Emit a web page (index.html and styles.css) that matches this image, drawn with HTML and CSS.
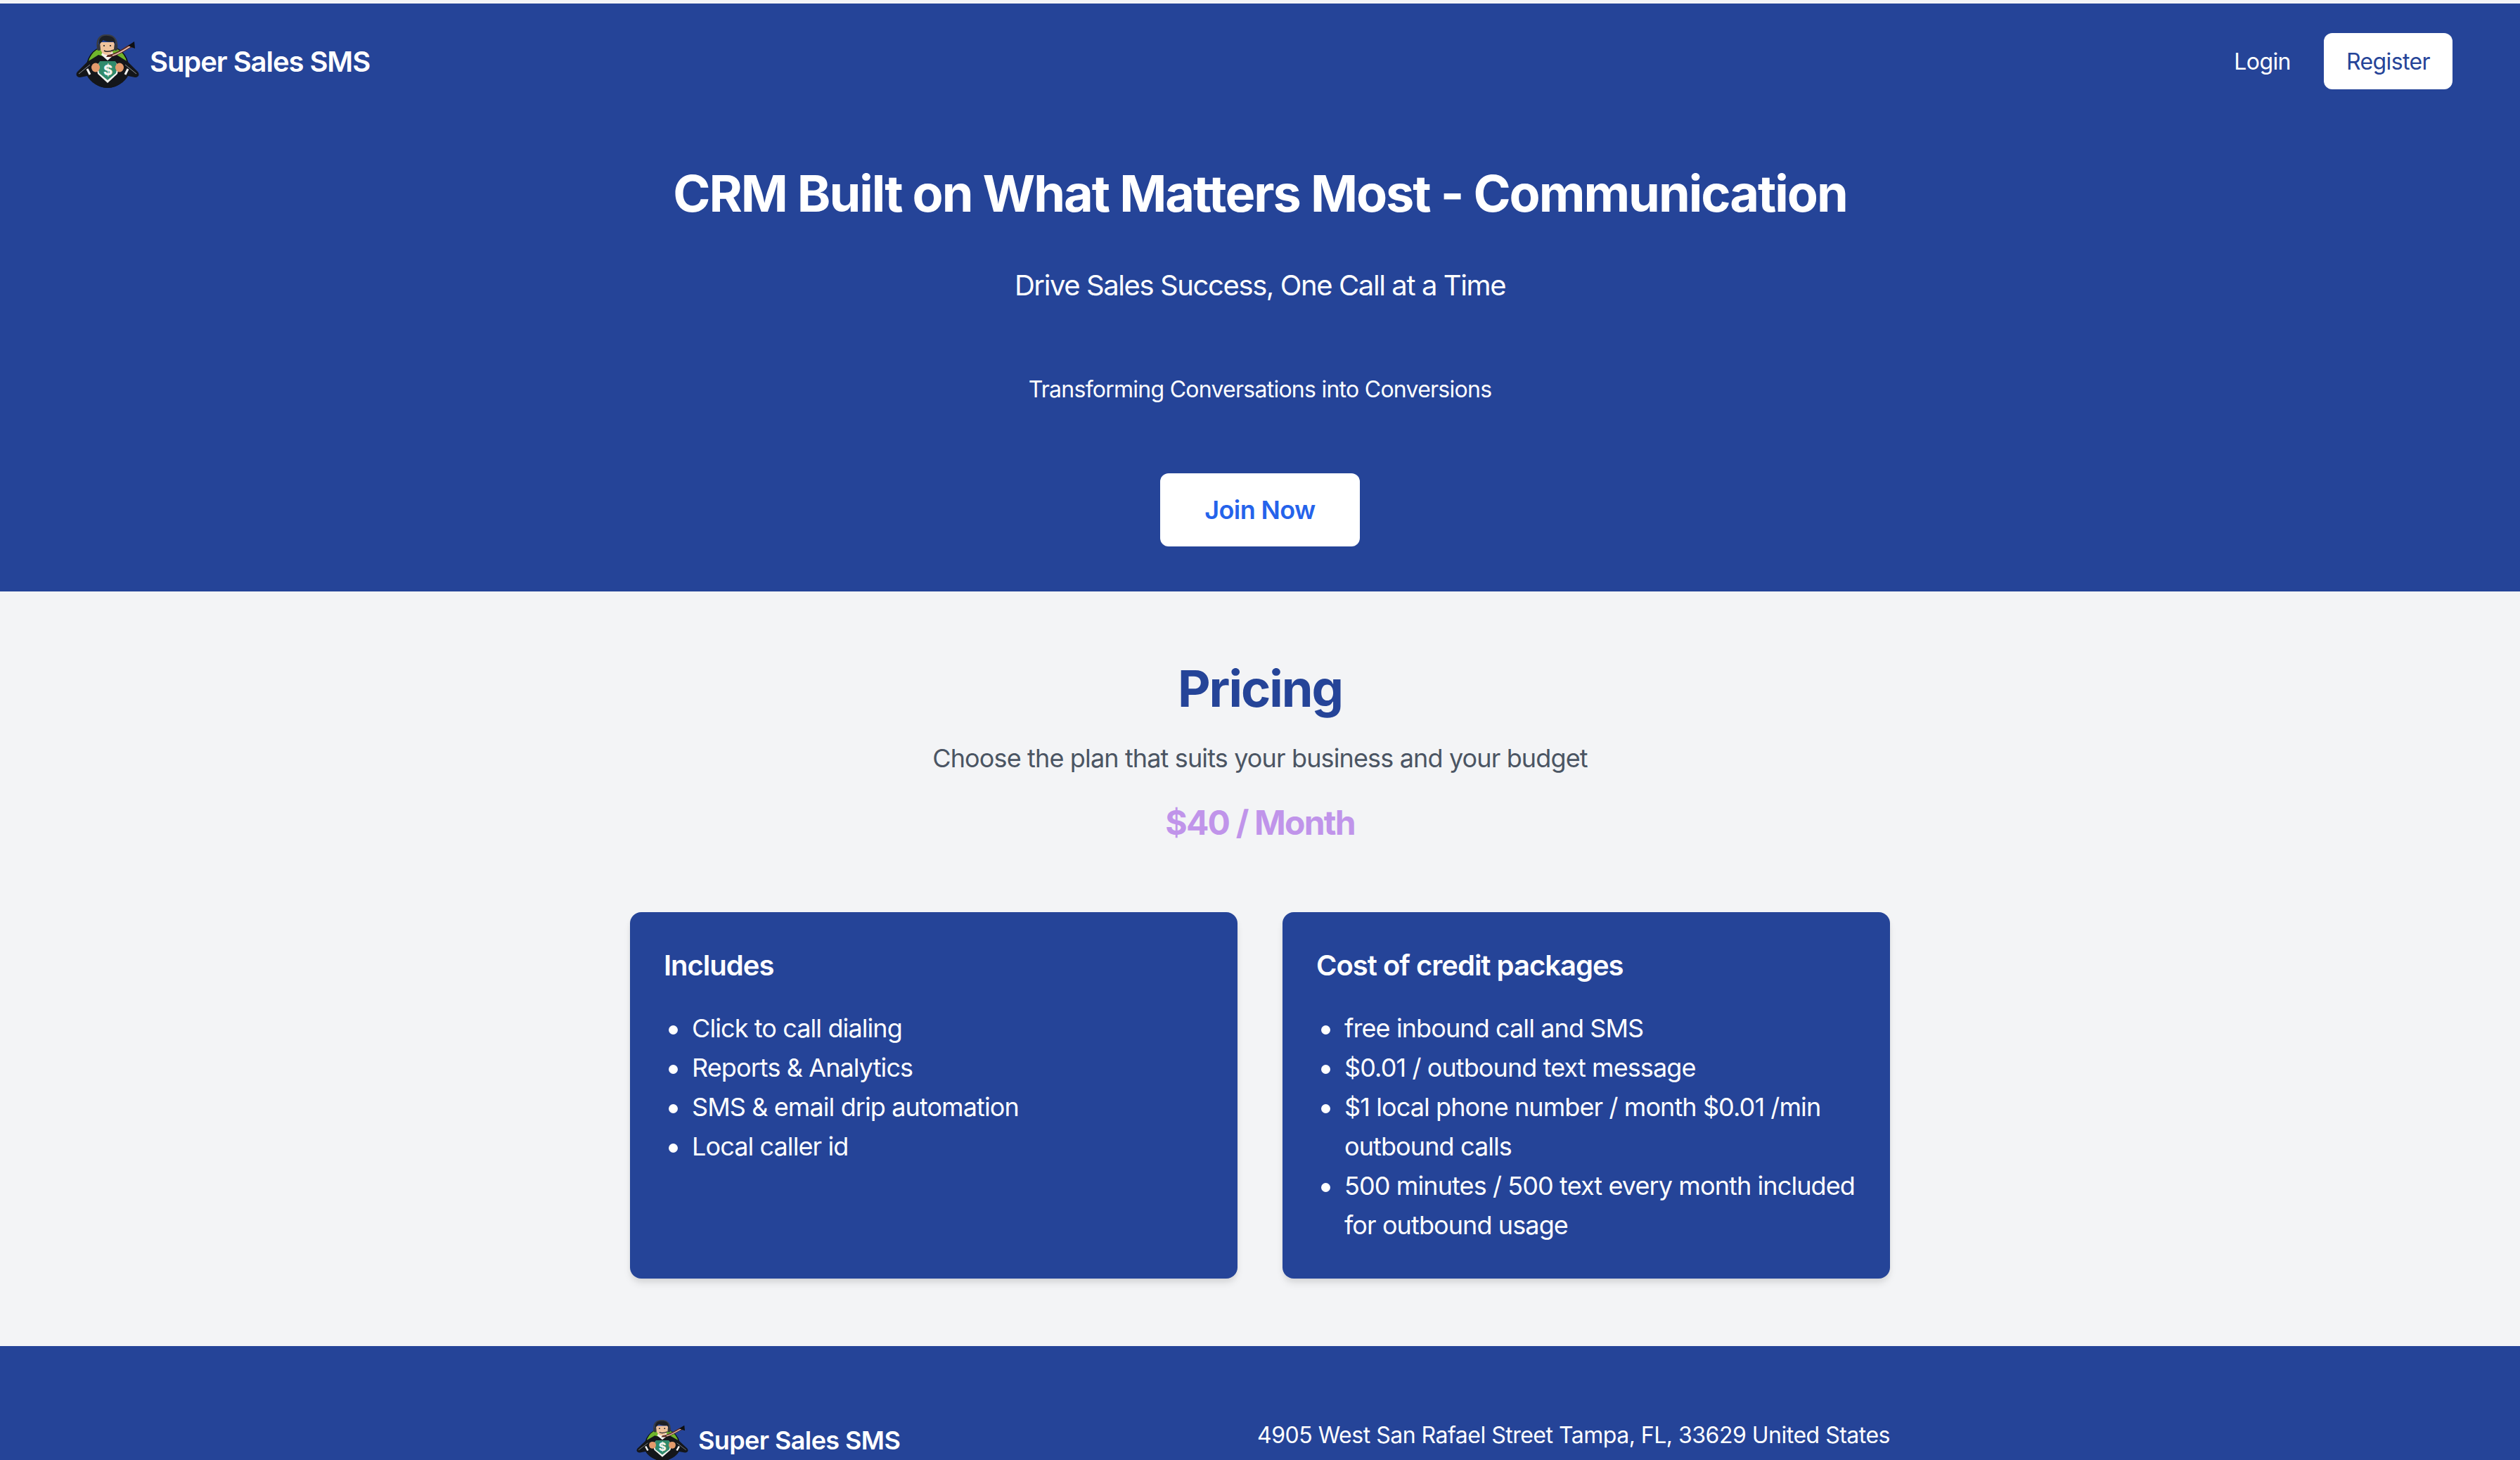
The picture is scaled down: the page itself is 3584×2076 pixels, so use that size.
FILE: index.html
```html
<!DOCTYPE html>
<html lang="en">
<head>
  <meta charset="UTF-8" />
  <meta name="viewport" content="width=device-width, initial-scale=1.0"/>
  <title>Super Sales SMS</title>
  <link rel="stylesheet" href="styles.css">
</head>
<body>
  <svg class="defs" width="0" height="0">
    <defs>
      <g id="mascot">
        <!-- badge -->
        <circle cx="63" cy="63" r="30" fill="#0d0f12"/>
        <circle cx="63" cy="62" r="28" fill="#6fb52c"/>
        <!-- suit -->
        <path d="M50 46 L34 56 L20 70 C17 74 19 78 24 78 L34 76 C38 84 50 93 63 93 C76 93 88 84 92 76 L102 78 C107 78 109 74 106 70 L92 56 L76 46 L63 50 Z" fill="#14161a"/>
        <path d="M22 73 L38 60 M104 73 L88 60" stroke="#8a8f94" stroke-width="1" fill="none"/>
        <path d="M34 66 L38 74 M92 66 L88 74" stroke="#f2f2f2" stroke-width="3" fill="none"/>
        <!-- shirt and shield -->
        <path d="M47 62 L52 56 L74 56 L79 62 L77 73 L63 86 L49 73 Z" fill="#f4f4f0"/>
        <path d="M52 55 L74 55 L77 62 L75 72 L63 82 L51 72 L49 62 Z" fill="#2f8a6c"/>
        <path d="M54 46 L63 54 L72 46 L70 42 L56 42 Z" fill="#f4f4f0"/>
        <!-- hands -->
        <ellipse cx="46" cy="64" rx="6" ry="6.5" fill="#e39a6c"/>
        <ellipse cx="80" cy="64" rx="6" ry="6.5" fill="#e39a6c"/>
        <!-- tie -->
        <path d="M61 49 L66 49 C76 48 86 42 93 37 L100 35 L101 29 L91 33 C82 39 72 45 63 46 Z" fill="#5c2a22"/>
        <path d="M70 47 C80 44 88 38 95 34" stroke="#e9c5b5" stroke-width="1.6" fill="none"/>
        <path d="M92 33 L101 27 L102 37 Z" fill="#0d0f12"/>
        <!-- head -->
        <path d="M49 36 C47 24 52 18 62 18 C72 18 77 25 76 36" fill="none" stroke="#3a3d42" stroke-width="2.4"/>
        <rect x="48" y="31" width="5" height="9" rx="2.5" fill="#34373c"/>
        <rect x="72" y="31" width="5" height="9" rx="2.5" fill="#34373c"/>
        <path d="M52 28 L73 28 L72 38 C70 43 66 46 62 46 C58 46 54 43 53 38 Z" fill="#f0c39c"/>
        <path d="M51 32 C49 22 56 18 63 19 C71 19 75 24 74 32 L71 27 C65 28 60 27 57 25 C55 27 53 29 51 32 Z" fill="#1d2024"/>
        <circle cx="58" cy="33" r="1.1" fill="#1d2024"/>
        <circle cx="67" cy="33" r="1.1" fill="#1d2024"/>
        <path d="M58 40 C61 42 65 42 72 39" stroke="#1d2024" stroke-width="1.6" fill="none"/>
      </g>
    </defs>
  </svg>

  <section class="hero">
    <header class="topbar">
      <a class="brand" href="#">
        <svg class="brand-logo" viewBox="18 17 90 76"><use href="#mascot"/><text class="mascot-sign" x="63" y="75" text-anchor="middle">$</text></svg>
        <span>Super Sales SMS</span>
      </a>
      <nav class="nav">
        <a class="nav-link" href="#">Login</a>
        <a class="nav-button" href="#">Register</a>
      </nav>
    </header>
    <div class="hero-copy">
      <h1>CRM Built on What Matters Most - Communication</h1>
      <p class="hero-sub">Drive Sales Success, One Call at a Time</p>
      <p class="hero-small">Transforming Conversations into Conversions</p>
      <a class="join-button" href="#">Join Now</a>
    </div>
  </section>

  <section class="pricing">
    <h2>Pricing</h2>
    <p class="pricing-sub">Choose the plan that suits your business and your budget</p>
    <p class="price">$40 / Month</p>
    <div class="cards">
      <div class="card">
        <h3>Includes</h3>
        <ul>
          <li>Click to call dialing</li>
          <li>Reports &amp; Analytics</li>
          <li>SMS &amp; email drip automation</li>
          <li>Local caller id</li>
        </ul>
      </div>
      <div class="card">
        <h3>Cost of credit packages</h3>
        <ul>
          <li>free inbound call and SMS</li>
          <li>$0.01 / outbound text message</li>
          <li>$1 local phone number / month $0.01 /min outbound calls</li>
          <li>500 minutes / 500 text every month included for outbound usage</li>
        </ul>
      </div>
    </div>
  </section>

  <footer class="footer">
    <div class="footer-inner">
      <a class="footer-brand" href="#">
        <svg class="footer-logo" viewBox="18 17 90 76" preserveAspectRatio="none"><use href="#mascot"/><text class="mascot-sign" x="63" y="75" text-anchor="middle">$</text></svg>
        <span>Super Sales SMS</span>
      </a>
      <p class="address">4905 West San Rafael Street Tampa, FL, 33629 United States</p>
    </div>
  </footer>
</body>
</html>
```

FILE: styles.css
```css
* {
  box-sizing: border-box;
}

html,
body {
  height: 100%;
  overflow: hidden;
}

body {
  margin: 0;
  padding-top: 5px;
  background: #f3f4f6;
  font-family: Inter, 'Noto Sans', sans-serif;
  color: #fff;
}

a {
  color: inherit;
  text-decoration: none;
}

h1, h2, h3, p, ul {
  margin: 0;
}

.defs {
  position: absolute;
}

.mascot-sign {
  font-family: Inter, sans-serif;
  font-size: 20px;
  font-weight: 800;
  fill: #f4f4f0;
}

.hero {
  background: #254498;
  height: 836px;
  padding-top: 42px;
}

.topbar {
  display: flex;
  justify-content: space-between;
  align-items: center;
  height: 80px;
  padding: 0 96px 0 108px;
}

.brand {
  display: flex;
  align-items: center;
  gap: 15px;
  font-size: 40px;
  font-weight: 600;
  letter-spacing: -1.07px;
}

.brand-logo {
  width: 90px;
  height: 76px;
}

.nav {
  display: flex;
  align-items: center;
  gap: 47px;
  font-size: 32px;
  letter-spacing: -0.6px;
}

.nav-button {
  display: flex;
  align-items: center;
  height: 80px;
  padding: 0 32px;
  background: #fff;
  color: #254498;
  border-radius: 12px;
}

.hero-copy {
  text-align: center;
  padding-top: 108px;
}

.hero-copy h1 {
  font-size: 72px;
  line-height: 80px;
  font-weight: 700;
  letter-spacing: -2.03px;
}

.hero-sub {
  font-size: 40px;
  line-height: 56px;
  margin-top: 63px;
  letter-spacing: -1.4px;
}

.hero-small {
  font-size: 32px;
  line-height: 48px;
  margin-top: 96px;
  letter-spacing: -0.74px;
}

.join-button {
  display: inline-block;
  width: 284px;
  height: 104px;
  line-height: 104px;
  margin-top: 95px;
  background: #fff;
  color: #2563eb;
  border-radius: 12px;
  font-size: 36px;
  font-weight: 600;
  letter-spacing: -0.6px;
}

.pricing {
  padding: 98px 0 96px;
  text-align: center;
}

.pricing h2 {
  font-size: 72px;
  line-height: 80px;
  font-weight: 700;
  color: #254498;
  letter-spacing: -2px;
}

.pricing-sub {
  font-size: 36px;
  line-height: 56px;
  margin-top: 31px;
  color: #4b5563;
  letter-spacing: -0.86px;
}

.price {
  font-size: 48px;
  line-height: 64px;
  margin-top: 32px;
  font-weight: 700;
  color: #c094ea;
  letter-spacing: -1.8px;
}

.cards {
  display: grid;
  grid-template-columns: 864px 864px;
  gap: 64px;
  justify-content: center;
  margin-top: 95px;
  text-align: left;
}

.card {
  background: #254498;
  padding: 48px;
  border-radius: 16px;
  box-shadow: 0 8px 12px -2px rgba(0, 0, 0, 0.1), 0 4px 8px -2px rgba(0, 0, 0, 0.06);
}

.card h3 {
  font-size: 40px;
  line-height: 56px;
  font-weight: 600;
  letter-spacing: -1px;
}

.card ul {
  margin-top: 33px;
  padding-left: 40px;
  list-style: none;
  font-size: 36px;
  line-height: 56px;
  letter-spacing: -0.9px;
}

.card li {
  position: relative;
}

.card li::before {
  content: "";
  position: absolute;
  left: -33px;
  top: 24px;
  width: 13px;
  height: 13px;
  border-radius: 50%;
  background: #fff;
}

.footer {
  background: #254498;
  height: 163px;
  padding-top: 103px;
}

.footer-inner {
  display: flex;
  justify-content: space-between;
  align-items: flex-start;
  width: 1792px;
  margin: 0 auto;
}

.footer-brand {
  display: flex;
  align-items: center;
  gap: 14px;
  padding: 2px 0 0 9px;
  font-size: 36px;
  font-weight: 600;
  letter-spacing: -0.6px;
}

.footer-logo {
  width: 74px;
  height: 58px;
}

.address {
  font-size: 32px;
  line-height: 48px;
  letter-spacing: -0.5px;
}
```
